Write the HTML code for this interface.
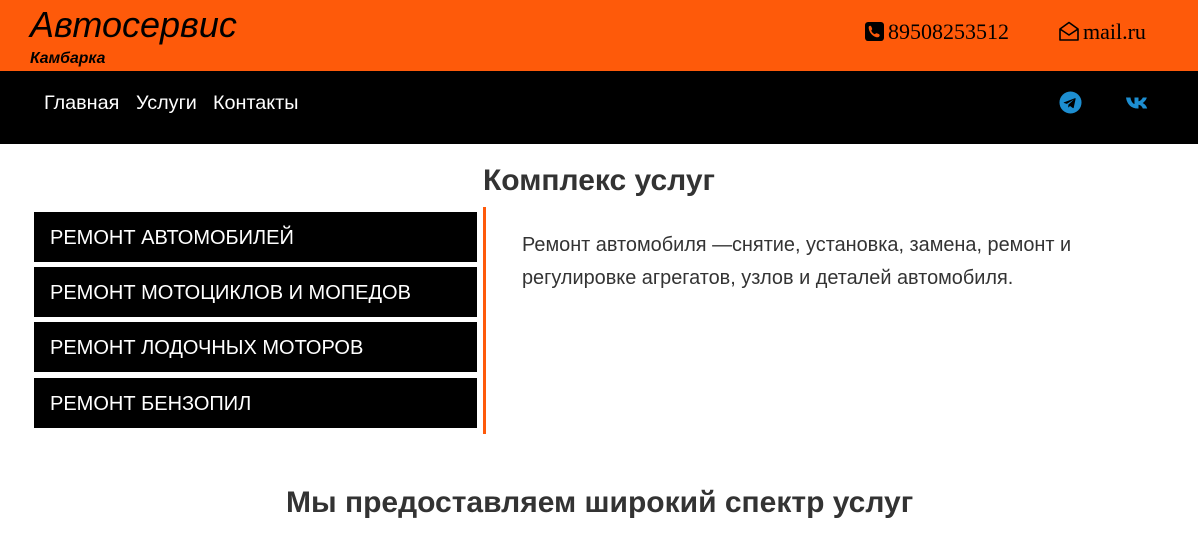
<!DOCTYPE html>
<html><head><meta charset="utf-8"><style>
*{margin:0;padding:0;box-sizing:border-box}
body{width:1198px;height:555px;overflow:hidden;background:#fff;font-family:"Liberation Sans",sans-serif}
.top{position:absolute;left:0;top:0;width:1198px;height:71px;background:#fe5a0a}
.logo{position:absolute;left:30px;top:4px;font-style:italic;font-size:36px;color:#000}
.sub{position:absolute;left:30px;top:50px;font-style:italic;font-weight:bold;font-size:15.8px;color:#000}
.ph{position:absolute;left:865px;top:19px;font-family:"Liberation Serif",serif;font-size:22px;color:#000}
.ml{position:absolute;left:1058px;top:19px;font-family:"Liberation Serif",serif;font-size:22px;color:#000}
.nav{position:absolute;left:0;top:71px;width:1198px;height:73px;background:#000}
.nav a{position:absolute;top:21px;color:#fff;font-size:19.8px;text-decoration:none}
h2{position:absolute;font-size:30px;font-weight:bold;color:#333;white-space:nowrap}
.btn{position:absolute;left:34px;width:443px;height:50px;background:#000;color:#fff;font-size:20px;padding:15px 0 0 16px}
.line{position:absolute;left:483px;top:207px;width:3px;height:227px;background:#fe5a0a}
.txt{position:absolute;left:522px;top:229px;font-size:19.9px;line-height:33px;color:#333}
</style></head><body>
<div class="top">
<div class="logo">Автосервис</div>
<div class="sub">Камбарка</div>
<div class="ph"><svg width="19" height="19" viewBox="0 0 18 18" style="vertical-align:-2px;margin-right:4px"><rect x="0" y="0" width="18" height="18" rx="3" fill="#000"/><path d="M5 3.5c1 0 1.5 2 1.8 3 .2.6-1 1.2-.8 1.8.6 1.5 1.6 2.6 3 3.2.6.2 1.3-1 1.9-.8 1 .3 3 .8 3 1.8 0 1-1 2-2 2C8 14.5 3.5 10 3.5 5 3.5 4 4.2 3.5 5 3.5z" fill="#fe5a0a"/></svg>89508253512</div>
<div class="ml"><svg width="22" height="21" viewBox="0 0 22 21" style="vertical-align:-3px;margin-right:3px"><path d="M2 8L11 1.5 20 8V19H2Z M2 8l9 6 9-6" fill="none" stroke="#000" stroke-width="1.6" stroke-linejoin="round"/></svg>mail.ru</div>
</div>
<div class="nav">
<a style="left:44px">Главная</a><a style="left:136px">Услуги</a><a style="left:213px">Контакты</a>
<svg style="position:absolute;left:1059px;top:20px" width="23" height="23" viewBox="0 0 24 24"><circle cx="12" cy="12" r="11.5" fill="#1d8ed1"/><path d="M5.5 11.8l11-4.3c.6-.2 1 .1.8.9l-1.9 8.8c-.1.6-.5.8-1 .5l-2.9-2.1-1.4 1.4c-.2.2-.3.2-.5.2l.2-3 5.4-4.9c.2-.2 0-.3-.3-.1l-6.7 4.2-2.9-.9c-.6-.2-.6-.6.2-.7z" fill="#000"/></svg>
<svg style="position:absolute;left:1125px;top:25px" width="25" height="14" viewBox="0 0 25 14"><path d="M0 0h4.5c.3 3 2 6 4 6.5V0h4v3.8c2-.2 3.8-2.5 4.3-3.8h4c-.6 2.6-2.7 4.6-4.2 5.5 1.5.7 3.8 2.5 4.6 5.5h-4.4c-.7-2-2.3-3.5-4.3-3.7V11h-.7C5.3 11 1 7 0 0z" fill="#1d8ed1" transform="translate(1,1.5)"/></svg>
</div>
<h2 style="left:483px;top:164px">Комплекс услуг</h2>
<div class="btn" style="top:212px">РЕМОНТ АВТОМОБИЛЕЙ</div>
<div class="btn" style="top:267px">РЕМОНТ МОТОЦИКЛОВ И МОПЕДОВ</div>
<div class="btn" style="top:322px">РЕМОНТ ЛОДОЧНЫХ МОТОРОВ</div>
<div class="btn" style="top:378px">РЕМОНТ БЕНЗОПИЛ</div>
<div class="line"></div>
<div class="txt">Ремонт автомобиля —снятие, установка, замена, ремонт и<br>регулировке агрегатов, узлов и деталей автомобиля.</div>
<h2 style="left:286px;top:486px">Мы предоставляем широкий спектр услуг</h2>
</body></html>
